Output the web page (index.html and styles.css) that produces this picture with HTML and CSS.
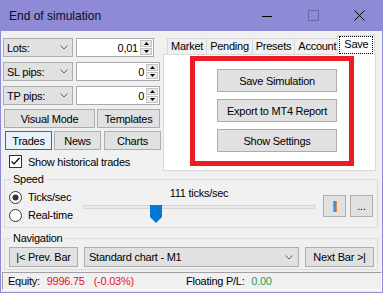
FILE: index.html
```html
<!DOCTYPE html>
<html lang="en">
<head>
    <meta charset="UTF-8">
    <meta name="viewport" content="width=device-width, initial-scale=1.0">
    <title>End of simulation</title>
    <link rel="stylesheet" href="styles.css">
</head>
<body>
    <div class="window">
        <div class="titlebar">
            <span class="title">End of simulation</span>
            <div class="caption-buttons">
                <span class="caption-btn"><svg width="10" height="10"><line x1="0" y1="5.5" x2="10" y2="5.5" stroke="#000"/></svg></span>
                <span class="caption-btn"><svg width="11" height="11"><rect x="0.5" y="0.5" width="10" height="10" fill="none" stroke="#6c68ad"/></svg></span>
                <span class="caption-btn"><svg width="11" height="11"><path d="M0.5 0.5 L10.5 10.5 M10.5 0.5 L0.5 10.5" stroke="#000"/></svg></span>
            </div>
        </div>

        <div class="top">
            <div class="left">
                <div class="param-row">
                    <div class="combo param-combo"><span>Lots:</span><svg class="chevron" width="8" height="5"><polyline points="0.5,0.5 4,4 7.5,0.5" fill="none" stroke="#606060"/></svg></div>
                    <div class="spin spin-short">
                        <span class="spin-value">0,01</span>
                        <div class="spin-arrows">
                            <span class="spin-btn"><svg width="5" height="3"><path d="M0 3 L2.5 0 L5 3 Z" fill="#000"/></svg></span>
                            <span class="spin-btn"><svg width="5" height="3"><path d="M0 0 L2.5 3 L5 0 Z" fill="#000"/></svg></span>
                        </div>
                    </div>
                </div>
                <div class="param-row">
                    <div class="combo param-combo"><span>SL pips:</span><svg class="chevron" width="8" height="5"><polyline points="0.5,0.5 4,4 7.5,0.5" fill="none" stroke="#606060"/></svg></div>
                    <div class="spin">
                        <span class="spin-value">0</span>
                        <div class="spin-arrows">
                            <span class="spin-btn"><svg width="5" height="3"><path d="M0 3 L2.5 0 L5 3 Z" fill="#000"/></svg></span>
                            <span class="spin-btn"><svg width="5" height="3"><path d="M0 0 L2.5 3 L5 0 Z" fill="#000"/></svg></span>
                        </div>
                    </div>
                </div>
                <div class="param-row">
                    <div class="combo param-combo"><span>TP pips:</span><svg class="chevron" width="8" height="5"><polyline points="0.5,0.5 4,4 7.5,0.5" fill="none" stroke="#606060"/></svg></div>
                    <div class="spin">
                        <span class="spin-value">0</span>
                        <div class="spin-arrows">
                            <span class="spin-btn"><svg width="5" height="3"><path d="M0 3 L2.5 0 L5 3 Z" fill="#000"/></svg></span>
                            <span class="spin-btn"><svg width="5" height="3"><path d="M0 0 L2.5 3 L5 0 Z" fill="#000"/></svg></span>
                        </div>
                    </div>
                </div>

                <div class="btn-row mode-row">
                    <button class="btn btn-visual">Visual Mode</button>
                    <button class="btn btn-templates">Templates</button>
                </div>
                <div class="btn-row view-row">
                    <button class="btn btn-view btn-focus">Trades</button>
                    <button class="btn btn-view">News</button>
                    <button class="btn btn-view btn-charts">Charts</button>
                </div>
                <label class="check-row">
                    <svg width="13" height="13"><rect x="0.5" y="0.5" width="12" height="12" fill="#fff" stroke="#333"/><polyline points="2.5,6.5 5,9 10.5,3" fill="none" stroke="#000" stroke-width="1.2"/></svg>
                    <span>Show historical trades</span>
                </label>
            </div>

            <div class="right">
                <div class="tabs">
                    <span class="tab">Market</span>
                    <span class="tab">Pending</span>
                    <span class="tab">Presets</span>
                    <span class="tab">Account</span>
                    <span class="tab tab-active"><span class="tab-focus">Save</span></span>
                </div>
                <div class="tab-panel">
                    <div class="save-frame">
                        <button class="btn btn-save">Save Simulation</button>
                        <button class="btn btn-save">Export to MT4 Report</button>
                        <button class="btn btn-save">Show Settings</button>
                    </div>
                </div>
            </div>
        </div>

        <fieldset class="group speed-group">
            <legend>Speed</legend>
            <div class="speed-body">
                <div class="radios">
                    <div class="radio-row">
                        <svg width="13" height="13"><circle cx="6.5" cy="6.5" r="6" fill="#fff" stroke="#333"/><circle cx="6.5" cy="6.5" r="3" fill="#333"/></svg>
                        <span>Ticks/sec</span>
                    </div>
                    <div class="radio-row">
                        <svg width="13" height="13"><circle cx="6.5" cy="6.5" r="6" fill="#fff" stroke="#333"/></svg>
                        <span>Real-time</span>
                    </div>
                </div>
                <div class="speed-slider">
                    <div class="speed-label">111 ticks/sec</div>
                    <div class="slider">
                        <div class="slider-track"></div>
                        <svg class="slider-thumb" style="left: 67px" width="12" height="18"><path d="M0 0 H12 V12 L6 18 L0 12 Z" fill="#0078d7"/></svg>
                    </div>
                </div>
                <div class="speed-buttons">
                    <button class="btn btn-small"><svg width="4" height="11"><rect x="0" y="0" width="4" height="11" fill="#de8a34"/><rect x="1" y="0" width="2" height="11" fill="#4a8fd4"/></svg></button>
                    <button class="btn btn-small">...</button>
                </div>
            </div>
        </fieldset>

        <fieldset class="group nav-group">
            <legend>Navigation</legend>
            <div class="nav-body">
                <button class="btn btn-nav">|&lt; Prev. Bar</button>
                <div class="combo chart-combo"><span>Standard chart - M1</span><svg class="chevron" width="8" height="5"><polyline points="0.5,0.5 4,4 7.5,0.5" fill="none" stroke="#606060"/></svg></div>
                <button class="btn btn-nav">Next Bar &gt;|</button>
            </div>
        </fieldset>

        <div class="statusbar">
            <span class="status-equity">Equity: <span class="neg equity-value">9996.75</span><span class="neg equity-pct">(-0.03%)</span></span>
            <span>Floating P/L: <span class="pos">0.00</span></span>
        </div>
    </div>
</body>
</html>
```

FILE: styles.css
```css
* {
    box-sizing: border-box;
    margin: 0;
    padding: 0;
}

body {
    font-family: "Liberation Sans", Arial, sans-serif;
    font-size: 11px;
    letter-spacing: -0.25px;
    color: #000;
    background: #f0f0f0;
}

button {
    font: inherit;
    letter-spacing: inherit;
    color: inherit;
}

.window {
    width: 383px;
    height: 293px;
    overflow: hidden;
    background: #f0f0f0;
    border: 1px solid #8e8ad6;
    border-top: 0;
    display: flex;
    flex-direction: column;
}

/* title bar */
.titlebar {
    height: 31px;
    flex-shrink: 0;
    background: #8e8ad6;
    display: flex;
    align-items: center;
    justify-content: space-between;
}

.title {
    font-size: 12px;
    letter-spacing: 0;
    padding-left: 8px;
    color: #0c0c1c;
}

.caption-buttons {
    display: flex;
}

.caption-btn {
    width: 46px;
    height: 31px;
    display: flex;
    align-items: center;
    justify-content: center;
}

/* common controls */
.btn {
    background: #e1e1e1;
    border: 1px solid #adadad;
    display: flex;
    align-items: center;
    justify-content: center;
    white-space: nowrap;
}

.btn-focus {
    border-color: #0078d7;
    background: #e5f1fb;
}

.combo {
    background: #e1e1e1;
    border: 1px solid #adadad;
    display: flex;
    align-items: center;
    justify-content: space-between;
    padding: 0 4px 0 3px;
}

/* top area */
.top {
    display: flex;
    align-items: flex-start;
    padding-left: 2px;
}

.left {
    width: 158px;
    padding-top: 7px;
    display: flex;
    flex-direction: column;
}

.param-row {
    display: flex;
    gap: 3px;
    height: 19px;
}

.param-row + .param-row {
    margin-top: 5px;
}

.param-combo {
    width: 70px;
}

.spin {
    width: 84px;
    background: #fff;
    border: 1px solid #a8a8a8;
    display: flex;
    align-items: center;
    justify-content: flex-end;
    padding: 1px;
}

.spin-short {
    width: 78px;
}

.spin-value {
    padding-right: 2px;
}

.spin-arrows {
    width: 12px;
    height: 100%;
    display: flex;
    flex-direction: column;
    gap: 1px;
}

.spin-btn {
    flex: 1;
    background: #e9e9e9;
    border: 1px solid #c4c4c4;
    display: flex;
    align-items: center;
    justify-content: center;
}

.btn-row {
    display: flex;
    height: 19px;
}

.mode-row {
    margin-top: 4px;
    margin-left: 1px;
    gap: 2px;
}

.btn-visual {
    width: 91px;
}

.btn-templates {
    width: 63px;
}

.view-row {
    margin-top: 3px;
    margin-left: 2px;
    gap: 2px;
}

.btn-view {
    width: 47px;
}

.btn-charts {
    width: 57px;
    margin-left: 1px;
}

.check-row {
    display: flex;
    align-items: center;
    gap: 6px;
    height: 15px;
    margin-top: 4px;
    padding-left: 6px;
}

/* tabs */
.right {
    width: 213px;
    margin-left: 2px;
    padding-top: 4px;
}

.tabs {
    display: flex;
    align-items: flex-end;
    height: 19px;
    padding-left: 4px;
}

.tab {
    height: 16px;
    line-height: 14px;
    padding: 0 3px;
    background: #f0f0f0;
    border: 1px solid #d9d9d9;
    border-bottom: 0;
    margin-right: -1px;
}

.tab-active {
    position: relative;
    z-index: 1;
    height: 20px;
    background: #fff;
    margin: 0 -2px -1px -2px;
    padding: 0 1px;
}

.tab-focus {
    display: block;
    height: 18px;
    line-height: 15px;
    padding: 0 4px;
    border: 1px dotted #000;
}

.tab-panel {
    height: 117px;
    background: #fff;
    border: 1px solid #d9d9d9;
}

.save-frame {
    width: 164px;
    height: 110px;
    margin: 1px 0 0 26px;
    border: 5px solid #ed1c24;
    padding: 8px 0 0 22px;
    display: flex;
    flex-direction: column;
    gap: 7px;
}

.btn-save {
    width: 120px;
    height: 23px;
}

/* group boxes */
.group {
    border: 1px solid #dcdcdc;
    margin: 2px 4px 0 3px;
    padding: 0 4px 1px 4px;
    min-width: 0;
}

.group legend {
    line-height: 13px;
    margin-left: 2px;
    padding: 0 2px;
}

.speed-body {
    display: flex;
    align-items: center;
    height: 40px;
}

.radios {
    width: 74px;
    display: flex;
    flex-direction: column;
}

.radio-row {
    display: flex;
    align-items: center;
    gap: 6px;
    height: 18px;
}

.speed-slider {
    width: 232px;
    align-self: flex-start;
    text-align: center;
}

.speed-label {
    line-height: 13px;
    padding-top: 1px;
}

.slider {
    position: relative;
    height: 18px;
    margin-top: 2px;
}

.slider-track {
    height: 4px;
    margin-top: 5px;
    background: #e7eaea;
    border: 1px solid #d6d6d6;
}

.slider-thumb {
    position: absolute;
    top: 0;
}

.speed-buttons {
    display: flex;
    gap: 4px;
    margin-left: 8px;
}

.btn-small {
    width: 23px;
    height: 22px;
}

.nav-group {
    margin-top: 4px;
    padding-right: 3px;
    padding-bottom: 2px;
}

.nav-body {
    display: flex;
    justify-content: space-between;
    height: 20px;
    margin-top: 2px;
}

.btn-nav {
    width: 69px;
}

.chart-combo {
    width: 215px;
    padding: 0 5px 0 4px;
}

/* status bar */
.statusbar {
    display: flex;
    align-items: center;
    height: 18px;
    margin: 2px 0 0 1px;
    padding-left: 5px;
    border-top: 1px solid #a0a0a0;
    border-left: 1px solid #a0a0a0;
    border-bottom: 1px solid #fff;
    border-right: 1px solid #fff;
}

.status-equity {
    width: 178px;
}

.equity-value {
    margin-left: 4px;
}

.equity-pct {
    margin-left: 9px;
}

.neg {
    color: #e8111a;
}

.pos {
    color: #1f9f5f;
    margin-left: 4px;
}
```
